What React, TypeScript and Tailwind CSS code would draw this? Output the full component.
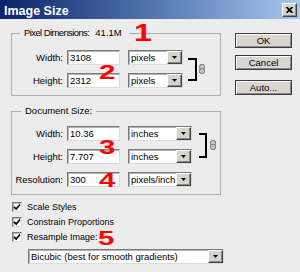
const sunken =
  "bg-white border border-t-[#7a7a7a] border-l-[#7a7a7a] border-b-[#dcdcdc] border-r-[#dcdcdc] shadow-[inset_1px_1px_0_#b4b4b4]"

const raised =
  "bg-[#d6d3cd] border border-t-white border-l-white border-b-[#404040] border-r-[#404040] shadow-[inset_-1px_-1px_0_#8a8a8a]"

const DropBtn = () => (
  <div className={`${raised} w-[15px] h-full flex items-center justify-center`}>
    <svg width="5" height="3" viewBox="0 0 5 3">
      <polygon points="0,0 5,0 2.5,3" fill="#000" />
    </svg>
  </div>
)

const Select = ({ text, className }: { text: string; className: string }) => (
  <div className={`${className} ${sunken} h-[15px] flex`}>
    <span className="flex-1 pl-[2px] leading-[13px] whitespace-nowrap overflow-hidden">{text}</span>
    <DropBtn />
  </div>
)

const Row = ({ label, value, unit, selW }: { label: string; value: string; unit: string; selW: string }) => (
  <div className="flex items-center h-[15px]">
    <span className="w-[51px] text-right leading-[13px]">{label}</span>
    <div className={`${sunken} ml-[4px] w-[53px] h-[15px] pl-[2px] leading-[13px]`}>{value}</div>
    <Select className={`ml-[8px] ${selW}`} text={unit} />
  </div>
)

const Chain = () => (
  <svg width="6" height="10" viewBox="0 0 6 10">
    <rect x="0.5" y="0.5" width="5" height="5" rx="2" fill="#c4c4c4" stroke="#707070" />
    <rect x="0.5" y="4.5" width="5" height="5" rx="2" fill="#c4c4c4" stroke="#707070" />
  </svg>
)

const Check = ({ label }: { label: string }) => (
  <div className="flex items-center h-[10px]">
    <div className={`${sunken} ml-[1px] w-[10px] h-[10px] flex items-center justify-center`}>
      <svg width="8" height="8" viewBox="0 0 8 8">
        <path d="M1 3.8 L3.2 6 L7 1.5" fill="none" stroke="#000" strokeWidth="1.7" />
      </svg>
    </div>
    <span className="ml-[5px] text-[9px] leading-[12px]">{label}</span>
  </div>
)

const Button = ({ text, className }: { text: string; className: string }) => (
  <div
    className={`${className} w-[57px] h-[15px] bg-[#d9d6d0] border border-[#3c3c3c] shadow-[inset_1px_1px_0_#fff,inset_-1px_-1px_0_#8a8a8a] flex items-center justify-center leading-[13px]`}
  >
    {text}
  </div>
)

export default function App() {
  return (
    <div className="relative w-[300px] h-[272px] overflow-hidden bg-[#ececec] text-[9.5px] text-black font-['Liberation_Sans',Arial,sans-serif]">
      {/* title bar */}
      <div className="h-[19px] flex justify-between bg-linear-to-r from-[#0a246a] to-[#a6caf0]">
        <span className="ml-[4px] mt-[4px] text-[12.5px] font-bold text-white leading-[14px]">Image Size</span>
        <div className={`${raised} mt-[3px] mr-[3px] w-[15px] h-[14px] flex items-center justify-center`}>
          <svg width="7" height="6" viewBox="0 0 7 6">
            <path d="M0.5 0 L6.5 6 M6.5 0 L0.5 6" stroke="#000" strokeWidth="1.7" />
          </svg>
        </div>
      </div>

      <div className="flex">
        {/* left */}
        <div className="w-[224px] pl-[11px]">
          <fieldset className="mt-[8px] w-[210px] border border-[#aeaeae] pt-[11px] pb-[7px]">
            <legend className="ml-[8px] pl-[4px] pr-[7px] leading-[12px]">
              <span className="tracking-[-0.6px]">Pixel Dimensions:</span>
              <span className="ml-[6px]">41.1M</span>
            </legend>
            <div className="flex">
              <div className="flex flex-col gap-[8px]">
                <Row label="Width:" value="3108" unit="pixels" selW="w-[55px]" />
                <Row label="Height:" value="2312" unit="pixels" selW="w-[55px]" />
              </div>
              <div className="self-center ml-[5px] w-[9px] h-[23px] border-t-2 border-r-2 border-b-2 border-black" />
              <div className="self-center ml-[2px]">
                <Chain />
              </div>
            </div>
          </fieldset>

          <fieldset className="mt-[9px] w-[210px] border border-[#aeaeae] pt-[9px] pb-[7px]">
            <legend className="ml-[9px] px-[4px] leading-[12px]">Document Size:</legend>
            <div className="flex">
              <div className="flex flex-col gap-[8px]">
                <Row label="Width:" value="10.36" unit="inches" selW="w-[64px]" />
                <Row label="Height:" value="7.707" unit="inches" selW="w-[64px]" />
              </div>
              <div className="self-center ml-[7px] w-[8px] h-[25px] border-t-2 border-r-2 border-b-2 border-black" />
              <div className="self-center ml-[3px]">
                <Chain />
              </div>
            </div>
            <div className="mt-[8px]">
              <Row label="Resolution:" value="300" unit="pixels/inch" selW="w-[64px]" />
            </div>
          </fieldset>

          <div className="mt-[7px] flex flex-col gap-[5px]">
            <Check label="Scale Styles" />
            <Check label="Constrain Proportions" />
            <Check label="Resample Image:" />
          </div>

          <Select className="mt-[7px] ml-[17px] w-[196px]" text="Bicubic (best for smooth gradients)" />
        </div>

        {/* right */}
        <div className="pl-[11px] pt-[14px] flex flex-col">
          <Button text="OK" className="" />
          <Button text="Cancel" className="mt-[7px]" />
          <Button text="Auto..." className="mt-[10px]" />
        </div>
      </div>

      {/* red annotation numbers */}
      <span className="absolute left-[134px] top-[22px] origin-left scale-x-[1.4] text-[23px] leading-none font-bold text-[#ff0000]">1</span>
      <span className="absolute left-[99px] top-[61px] origin-left scale-x-[1.4] text-[21px] leading-none font-bold text-[#ff0000]">2</span>
      <span className="absolute left-[99px] top-[136px] origin-left scale-x-[1.4] text-[21px] leading-none font-bold text-[#ff0000]">3</span>
      <span className="absolute left-[99px] top-[169px] origin-left scale-x-[1.4] text-[21px] leading-none font-bold text-[#ff0000]">4</span>
      <span className="absolute left-[98px] top-[227px] origin-left scale-x-[1.4] text-[21px] leading-none font-bold text-[#ff0000]">5</span>
    </div>
  )
}
